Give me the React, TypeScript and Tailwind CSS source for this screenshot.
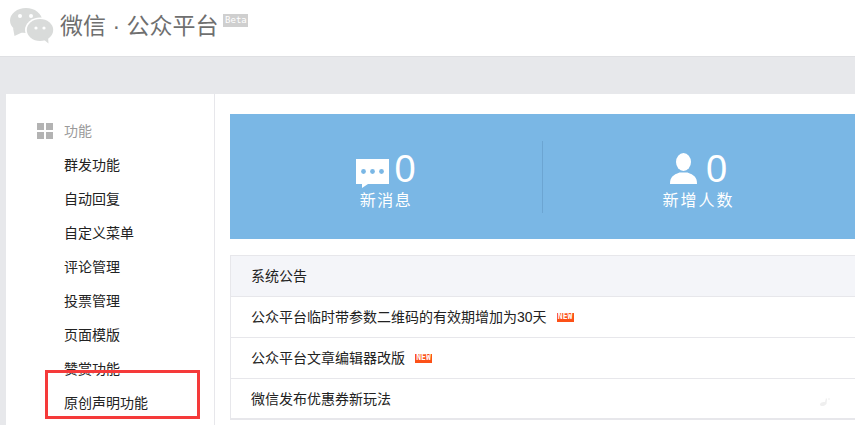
import React from "react";

const FONT = "font-['Liberation_Sans','Noto_Sans_CJK_SC',sans-serif]";

const menuItems = [
  "群发功能",
  "自动回复",
  "自定义菜单",
  "评论管理",
  "投票管理",
  "页面模版",
  "赞赏功能",
  "原创声明功能",
];

const notices = [
  { title: "公众平台临时带参数二维码的有效期增加为30天", isNew: true },
  { title: "公众平台文章编辑器改版", isNew: true },
  { title: "微信发布优惠券新玩法", isNew: false },
];

const WechatLogo = () => (
  <svg width="44" height="37" viewBox="0 0 44 37" className="shrink-0">
    <ellipse cx="16" cy="12.5" rx="16" ry="12.5" fill="#d9dbda" />
    <path d="M3 20L4.5 28L13 24Z" fill="#d9dbda" />
    <ellipse cx="30" cy="22" rx="15" ry="12.5" fill="#fff" />
    <ellipse cx="30" cy="22" rx="13.2" ry="11" fill="#d9dbda" />
    <path d="M33 31L38.5 35.5L38 28Z" fill="#d9dbda" />
    <circle cx="10" cy="8" r="2" fill="#fff" />
    <circle cx="21" cy="8" r="2" fill="#fff" />
    <circle cx="26" cy="20" r="1.6" fill="#fff" />
    <circle cx="34" cy="20" r="1.6" fill="#fff" />
  </svg>
);

const GridIcon = () => (
  <svg width="16" height="16" viewBox="0 0 16 16" fill="#b3b3b3">
    <rect x="0" y="0" width="7" height="7" />
    <rect x="9" y="0" width="7" height="7" />
    <rect x="0" y="9" width="7" height="7" />
    <rect x="9" y="9" width="7" height="7" />
  </svg>
);

const MessageIcon = () => (
  <svg width="33" height="29" viewBox="0 0 33 29" fill="#fff">
    <path d="M0 0H33V25H12L6 29V25H0Z" />
    <circle cx="7.5" cy="12.5" r="2.4" fill="#7ab7e5" />
    <circle cx="16.5" cy="12.5" r="2.4" fill="#7ab7e5" />
    <circle cx="25.5" cy="12.5" r="2.4" fill="#7ab7e5" />
  </svg>
);

const UserIcon = () => (
  <svg width="27" height="31" viewBox="0 0 27 31" fill="#fff" className="mb-[4px]">
    <ellipse cx="13.5" cy="9" rx="7.5" ry="9" />
    <path d="M0 31C0 24 3 22 9.5 19.5H17.5C24 22 27 24 27 31Z" />
  </svg>
);

const Watermark = () => (
  <svg width="14" height="10" viewBox="0 0 14 10" fill="#efefef" className="absolute left-[819px] top-[397px]">
    <path d="M1 8C1 5 4 5 6 5L7 1L8 2L7.5 7C6 9 2 10 1 8Z" />
    <circle cx="10" cy="2" r="1" fill="#f5f5f5" />
  </svg>
);

const NewBadge = () => (
  <span className="ml-[10px] flex h-[9px] w-[17px] items-center justify-center bg-[#fc5118] font-['DejaVu_Sans_Mono',monospace] text-[8px] font-bold leading-none text-white">
    NEW
  </span>
);

export default function App() {
  return (
    <div className={`relative h-[425px] w-[855px] overflow-hidden bg-[#e7e8eb] ${FONT}`}>
      <header className="flex h-[57px] items-start border-b border-[#dfe0e3] bg-white pl-[10px] pt-[8px]">
        <WechatLogo />
        <h1 className="ml-[6px] mt-[2px] text-[23px] leading-[32px] text-[#6f6f6f]">微信 · 公众平台</h1>
        <span className="ml-[5px] mt-[6px] flex h-[13px] w-[25px] items-center justify-center bg-[#cfcfcf] font-['DejaVu_Sans_Mono',monospace] text-[9px] leading-none text-white">
          Beta
        </span>
      </header>

      <div className="ml-[6px] mt-[37px] flex h-[331px] bg-white">
        <aside className="w-[209px] shrink-0 border-r border-[#e7e7eb] pt-[20px]">
          <div className="flex h-[34px] items-center pl-[31px]">
            <GridIcon />
            <span className="ml-[11px] text-[14px] text-[#9a9a9a]">功能</span>
          </div>
          <ul>
            {menuItems.map((item) => (
              <li key={item} className="flex h-[34px] items-center pl-[58px] text-[14px] text-[#222222]">
                {item}
              </li>
            ))}
          </ul>
        </aside>

        <main className="min-w-0 flex-1 pl-[15px] pt-[20px]">
          <section className="flex h-[125px] w-[640px] items-center bg-[#7ab7e5] text-white">
            <div className="flex h-[72px] w-[313px] flex-col items-center border-r border-[#6ca5d2] pt-[11px]">
              <div className="flex h-[36px] items-end">
                <MessageIcon />
                <span className="ml-[5px] text-[38px] font-light leading-[38px]">0</span>
              </div>
              <span className="mt-[1px] text-[16px] leading-[24px] tracking-[1.5px]">新消息</span>
            </div>
            <div className="flex h-[72px] w-[311px] flex-col items-center pt-[11px]">
              <div className="flex h-[36px] items-end">
                <UserIcon />
                <span className="ml-[9px] text-[38px] font-light leading-[38px]">0</span>
              </div>
              <span className="mt-[1px] text-[16px] leading-[24px] tracking-[2px]">新增人数</span>
            </div>
          </section>

          <section className="mt-[16px] w-[640px] border border-[#e7e7eb] border-r-0">
            <div className="flex h-[41px] items-center border-b border-[#e7e7eb] bg-[#f4f5f9] pl-[20px] pt-[1px] text-[14px] text-[#222222]">
              系统公告
            </div>
            {notices.map((notice) => (
              <div
                key={notice.title}
                className="flex h-[41px] items-center border-b border-[#e7e7eb] pl-[20px] text-[14px] text-[#222222] last:h-[40px] last:pt-[2px]"
              >
                {notice.title}
                {notice.isNew && <NewBadge />}
              </div>
            ))}
          </section>
        </main>
      </div>

      <Watermark />
      <div className="absolute left-[45px] top-[370px] h-[49px] w-[155px] border-[3px] border-[#f53a3a]" />
    </div>
  );
}
